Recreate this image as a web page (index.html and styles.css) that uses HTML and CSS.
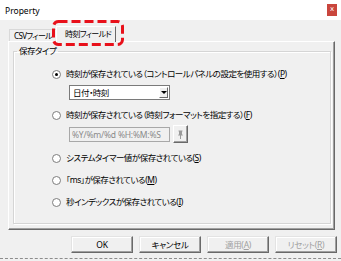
FILE: index.html
```html
<!DOCTYPE html>
<html lang="ja">
<head>
<meta charset="utf-8">
<link rel="stylesheet" href="styles.css">
</head>
<body>
<div class="window">
  <div class="titlebar">
    <span class="title">Property</span>
    <span class="close">x</span>
  </div>
  <div class="content">
    <div class="tabs">
      <div class="tab">CSVフィール</div>
      <div class="tab active">時刻フィールド</div>
    </div>
    <div class="panel">
      <fieldset class="group">
        <legend>保存タイプ</legend>
        <div class="opt first"><span class="radio checked"></span><span class="label">時刻が保存されている（コントロールパネルの設定を使用する）(<u>P</u>)</span></div>
        <div class="select"><span class="sel-text">日付・時刻</span><span class="drop"><span class="tri"></span></span></div>
        <div class="opt"><span class="radio"></span><span class="label">時刻が保存されている（時刻フォーマットを指定する）(<u>F</u>)</span></div>
        <div class="fmt-row">
          <div class="input">%Y/%m/%d %H:%M:%S</div>
          <div class="pin-btn">
            <svg width="7" height="9" viewBox="0 0 7 9"><path d="M1.5 0.5h4v1h-0.5v2.5l1 1.5h-5l1-1.5v-2.5h-0.5z" fill="#9a9a9a"/><path d="M3.5 5v4" stroke="#9a9a9a" stroke-width="1"/></svg>
          </div>
        </div>
        <div class="opt"><span class="radio"></span><span class="label">システムタイマー値が保存されている(<u>S</u>)</span></div>
        <div class="opt"><span class="radio"></span><span class="label">「ms」が保存されている(<u>M</u>)</span></div>
        <div class="opt"><span class="radio"></span><span class="label">秒インデックスが保存されている(<u>I</u>)</span></div>
      </fieldset>
    </div>
    <div class="buttons">
      <div class="btn">OK</div>
      <div class="btn">キャンセル</div>
      <div class="btn disabled">適用(<u>A</u>)</div>
      <div class="btn disabled">リセット(<u>R</u>)</div>
    </div>
  </div>
  <div class="dash"></div>
  <svg class="highlight" width="341" height="261" viewBox="0 0 341 261">
    <rect x="53.5" y="21.5" width="69" height="23" rx="5" ry="5" fill="none" stroke="#e8101a" stroke-width="3" stroke-dasharray="9 4"/>
  </svg>
</div>
</body>
</html>
```
FILE: styles.css
```css
html, body {
  margin: 0;
  padding: 0;
}
body {
  width: 341px;
  height: 261px;
  background: #ffffff;
  font-family: "Noto Sans", "Noto Sans CJK JP", sans-serif;
  font-feature-settings: "palt";
  font-size: 8.5px;
  letter-spacing: -0.5px;
  color: #000;
  overflow: hidden;
}
.window {
  position: relative;
  width: 341px;
  height: 261px;
  background: #f0f0f0;
  display: flex;
  flex-direction: column;
}
.titlebar {
  height: 20px;
  background: #ffffff;
  display: flex;
  align-items: center;
  padding: 0 4px 0 5px;
  box-sizing: border-box;
}
.title {
  font-size: 8.5px;
  letter-spacing: 0;
  line-height: 12px;
  margin-top: 1px;
}
.close {
  margin-left: auto;
  width: 10px;
  height: 12px;
  margin-top: -1px;
  background: #c9463d;
  color: #fff;
  font-size: 7px;
  letter-spacing: 0;
  line-height: 11px;
  text-align: center;
  font-family: "DejaVu Sans", sans-serif;
}
.content {
  display: flex;
  flex-direction: column;
  padding: 6px 4px 0 8px;
}
.tabs {
  display: flex;
  align-items: flex-end;
  height: 15px;
  padding-left: 1px;
}
.tab {
  height: 12px;
  line-height: 11px;
  padding: 0 0 0 4px;
  border: 1px solid #d9d9d9;
  border-bottom: none;
  border-right: none;
  box-sizing: border-box;
  width: 47px;
  white-space: nowrap;
  background: #f0f0f0;
  font-size: 8px;
  letter-spacing: -0.6px;
}
.tab.active {
  height: 16px;
  line-height: 14px;
  width: 60px;
  padding-left: 8px;
  border-left: 1px solid #ffffff;
  border-top: 1px solid #ffffff;
  border-right: 1px solid #696969;
  margin-bottom: -1px;
  position: relative;
  z-index: 1;
}
.panel {
  margin-right: 2px;
  border: 1px solid;
  border-color: #ffffff #696969 #696969 #ffffff;
  box-shadow: inset -1px -1px 0 #a0a0a0;
  padding: 3px 3px 5px 4px;
  height: 189px;
  box-sizing: border-box;
}
.group {
  margin: 0;
  padding: 0;
  border: 1px solid #d5d5d5;
  box-shadow: 1px 1px 0 #ffffff, inset 1px 1px 0 #ffffff;
  height: 179px;
  box-sizing: border-box;
  display: flex;
  flex-direction: column;
}
legend {
  padding: 0 2px;
  margin-left: 3px;
  line-height: 12px;
}
.opt {
  display: flex;
  align-items: center;
  height: 14px;
  margin: 8px 0 0 38px;
  white-space: nowrap;
}
.opt.first {
  margin-top: 10px;
}
.radio {
  width: 9px;
  height: 9px;
  box-sizing: border-box;
  border: 1px solid #7d7d7d;
  border-radius: 50%;
  background: #ffffff;
  display: flex;
  align-items: center;
  justify-content: center;
  margin-right: 5px;
  flex: none;
}
.radio.checked::after {
  content: "";
  width: 3px;
  height: 3px;
  border-radius: 50%;
  background: #000;
}
.label {
  line-height: 14px;
}
.select {
  margin-top: 4px;
  margin-left: 55px;
  width: 101px;
  height: 15px;
  box-sizing: border-box;
  border: 1px solid #7a7a7a;
  background: #ffffff;
  display: flex;
  align-items: center;
}
.sel-text {
  padding-left: 3px;
  line-height: 13px;
  flex: 1;
}
.drop {
  width: 9px;
  height: 11px;
  margin-right: 1px;
  background: #f0f0f0;
  border: 1px solid;
  border-color: #ffffff #696969 #696969 #ffffff;
  box-sizing: border-box;
  display: flex;
  align-items: center;
  justify-content: center;
}
.tri {
  width: 0;
  height: 0;
  border-left: 3px solid transparent;
  border-right: 3px solid transparent;
  border-top: 3px solid #000;
}
.fmt-row {
  display: flex;
  align-items: center;
  margin-top: 3px;
  margin-left: 55px;
  height: 18px;
  gap: 3px;
}
.input {
  width: 101px;
  height: 15px;
  box-sizing: border-box;
  border: 1px solid #a8a8a8;
  background: #f0f0f0;
  color: #8a8a8a;
  font-size: 8.5px;
  letter-spacing: -0.2px;
  line-height: 13px;
  padding-left: 2px;
  white-space: nowrap;
  overflow: hidden;
}
.pin-btn {
  width: 15px;
  height: 18px;
  box-sizing: border-box;
  border: 1px solid;
  border-color: #ffffff #696969 #696969 #ffffff;
  box-shadow: inset -1px -1px 0 #a0a0a0;
  display: flex;
  align-items: center;
  justify-content: center;
}
.buttons {
  display: flex;
  justify-content: flex-end;
  gap: 6px;
  margin-top: 6px;
}
.btn {
  width: 62px;
  height: 17px;
  box-sizing: border-box;
  border: 1px solid;
  border-color: #e3e3e3 #696969 #696969 #e3e3e3;
  box-shadow: inset -1px -1px 0 #a0a0a0, inset 1px 1px 0 #ffffff;
  text-align: center;
  line-height: 15px;
  background: #f0f0f0;
  letter-spacing: -0.3px;
}
.btn.disabled {
  color: #a0a0a0;
}
.dash {
  margin-top: auto;
  margin-bottom: 2px;
  height: 0;
  border-top: 1px dashed #8c8c8c;
}
.highlight {
  position: absolute;
  left: 0;
  top: 0;
  pointer-events: none;
}
```
